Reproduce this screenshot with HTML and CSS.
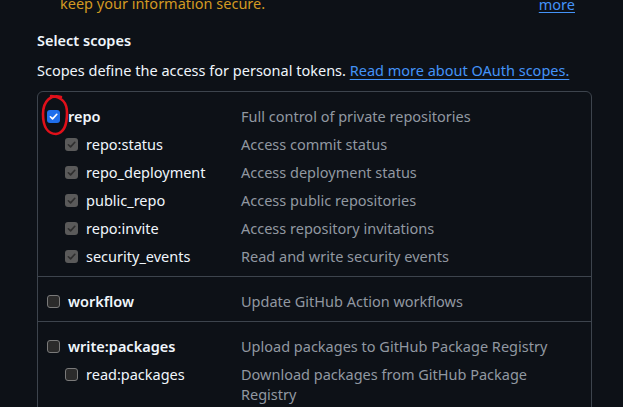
FILE: index.html
```html
<!DOCTYPE html>
<html lang="en">
<head>
<meta charset="utf-8">
<title>Select scopes</title>
<link rel="stylesheet" href="styles.css">
</head>
<body>
<div class="page">
  <div class="notice">
    <span class="notice-text">keep your information secure.</span>
    <a class="notice-link" href="#">more</a>
  </div>

  <h3 class="title">Select scopes</h3>
  <p class="intro">Scopes define the access for personal tokens. <a href="#" class="link">Read more about OAuth scopes.</a></p>

  <div class="scopes">
    <svg class="annotation" width="60" height="60" viewBox="0 0 60 60" aria-hidden="true">
      <path d="M24 6 C 14 3, 6 10, 6 23 C 6 36, 11 43, 19 43 C 27 42, 30 33, 30 22 C 30 12, 26 6, 14 5" fill="none" stroke="#e0101a" stroke-width="2.6" stroke-linecap="round"/>
    </svg>

    <div class="group">
      <div class="row">
        <label class="name top"><span class="cb cb-checked"><svg viewBox="0 0 12 12"><path d="M2.6 6.3 L5 8.6 L9.6 3.6" fill="none" stroke="#fff" stroke-width="1.8" stroke-linecap="round" stroke-linejoin="round"/></svg></span>repo</label>
        <span class="desc">Full control of private repositories</span>
      </div>
      <div class="row">
        <label class="name child"><span class="cb cb-disabled"><svg viewBox="0 0 12 12"><path d="M2.6 6.3 L5 8.6 L9.6 3.6" fill="none" stroke="#2e2e2e" stroke-width="1.8" stroke-linecap="round" stroke-linejoin="round"/></svg></span>repo:status</label>
        <span class="desc">Access commit status</span>
      </div>
      <div class="row">
        <label class="name child"><span class="cb cb-disabled"><svg viewBox="0 0 12 12"><path d="M2.6 6.3 L5 8.6 L9.6 3.6" fill="none" stroke="#2e2e2e" stroke-width="1.8" stroke-linecap="round" stroke-linejoin="round"/></svg></span>repo_deployment</label>
        <span class="desc">Access deployment status</span>
      </div>
      <div class="row">
        <label class="name child"><span class="cb cb-disabled"><svg viewBox="0 0 12 12"><path d="M2.6 6.3 L5 8.6 L9.6 3.6" fill="none" stroke="#2e2e2e" stroke-width="1.8" stroke-linecap="round" stroke-linejoin="round"/></svg></span>public_repo</label>
        <span class="desc">Access public repositories</span>
      </div>
      <div class="row">
        <label class="name child"><span class="cb cb-disabled"><svg viewBox="0 0 12 12"><path d="M2.6 6.3 L5 8.6 L9.6 3.6" fill="none" stroke="#2e2e2e" stroke-width="1.8" stroke-linecap="round" stroke-linejoin="round"/></svg></span>repo:invite</label>
        <span class="desc">Access repository invitations</span>
      </div>
      <div class="row">
        <label class="name child"><span class="cb cb-disabled"><svg viewBox="0 0 12 12"><path d="M2.6 6.3 L5 8.6 L9.6 3.6" fill="none" stroke="#2e2e2e" stroke-width="1.8" stroke-linecap="round" stroke-linejoin="round"/></svg></span>security_events</label>
        <span class="desc">Read and write security events</span>
      </div>
    </div>

    <div class="group">
      <div class="row">
        <label class="name top"><span class="cb cb-empty"></span>workflow</label>
        <span class="desc">Update GitHub Action workflows</span>
      </div>
    </div>

    <div class="group">
      <div class="row">
        <label class="name top"><span class="cb cb-empty"></span>write:packages</label>
        <span class="desc">Upload packages to GitHub Package Registry</span>
      </div>
      <div class="row">
        <label class="name child"><span class="cb cb-empty"></span>read:packages</label>
        <span class="desc">Download packages from GitHub Package Registry</span>
      </div>
    </div>

    <div class="group">
      <div class="row">
        <label class="name top"><span class="cb cb-empty"></span>delete:packages</label>
        <span class="desc">Delete packages from GitHub Package Registry</span>
      </div>
    </div>
  </div>
</div>
</body>
</html>
```

FILE: styles.css
```css
html, body {
  margin: 0;
  padding: 0;
  background: #0d1117;
}

body {
  font-family: "Noto Sans", "Open Sans", sans-serif;
  font-size: 14.5px;
  line-height: 20px;
  color: #e6edf3;
  overflow: hidden;
  height: 407px;
}

.page {
  padding: 0 31px 0 37px;
}

.notice {
  display: flex;
  justify-content: space-between;
  align-items: flex-start;
  margin-top: -7px;
  padding-left: 23px;
  padding-right: 17px;
  height: 19px;
}

.notice-text {
  color: #d29922;
}

.notice-link {
  color: #4493f8;
  text-decoration: underline;
  text-underline-offset: 2px;
  padding-top: 1px;
}

.title {
  margin: 18px 0 10px;
  font-size: 14.5px;
  line-height: 20px;
  font-weight: 600;
  color: #f0f6fc;
}

.intro {
  margin: 0 0 11px;
  color: #f0f6fc;
}

.link {
  color: #4493f8;
  text-decoration: underline;
  text-underline-offset: 3px;
}

.scopes {
  position: relative;
  border: 1px solid #3d444d;
  border-radius: 6px;
  padding: 0 16px 0 9px;
}

.annotation {
  position: absolute;
  left: -1px;
  top: -1px;
}

.group {
  display: flex;
  flex-direction: column;
  gap: 8px;
  padding: 14px 0 10px;
  margin: 0 -16px 0 -9px;
  padding-left: 9px;
  padding-right: 16px;
}

.group + .group {
  border-top: 1px solid #3d444d;
}

.row {
  display: grid;
  grid-template-columns: 194px 1fr;
  align-items: start;
}

.name {
  display: flex;
  align-items: center;
  gap: 8px;
  height: 20px;
  color: #f0f6fc;
}

.name.top {
  font-weight: 600;
}

.name.child {
  padding-left: 18px;
}

.desc {
  color: #9198a1;
}

.cb {
  flex: none;
  width: 13px;
  height: 13px;
  box-sizing: border-box;
  border-radius: 3px;
  display: inline-flex;
  align-items: center;
  justify-content: center;
}

.cb svg {
  width: 11px;
  height: 11px;
}

.cb-checked {
  background: #1f6feb;
}

.cb-disabled {
  background: #5a5a5a;
}

.cb-empty {
  background: #2b2b2b;
  border: 1.5px solid #7a7a7a;
}
```
